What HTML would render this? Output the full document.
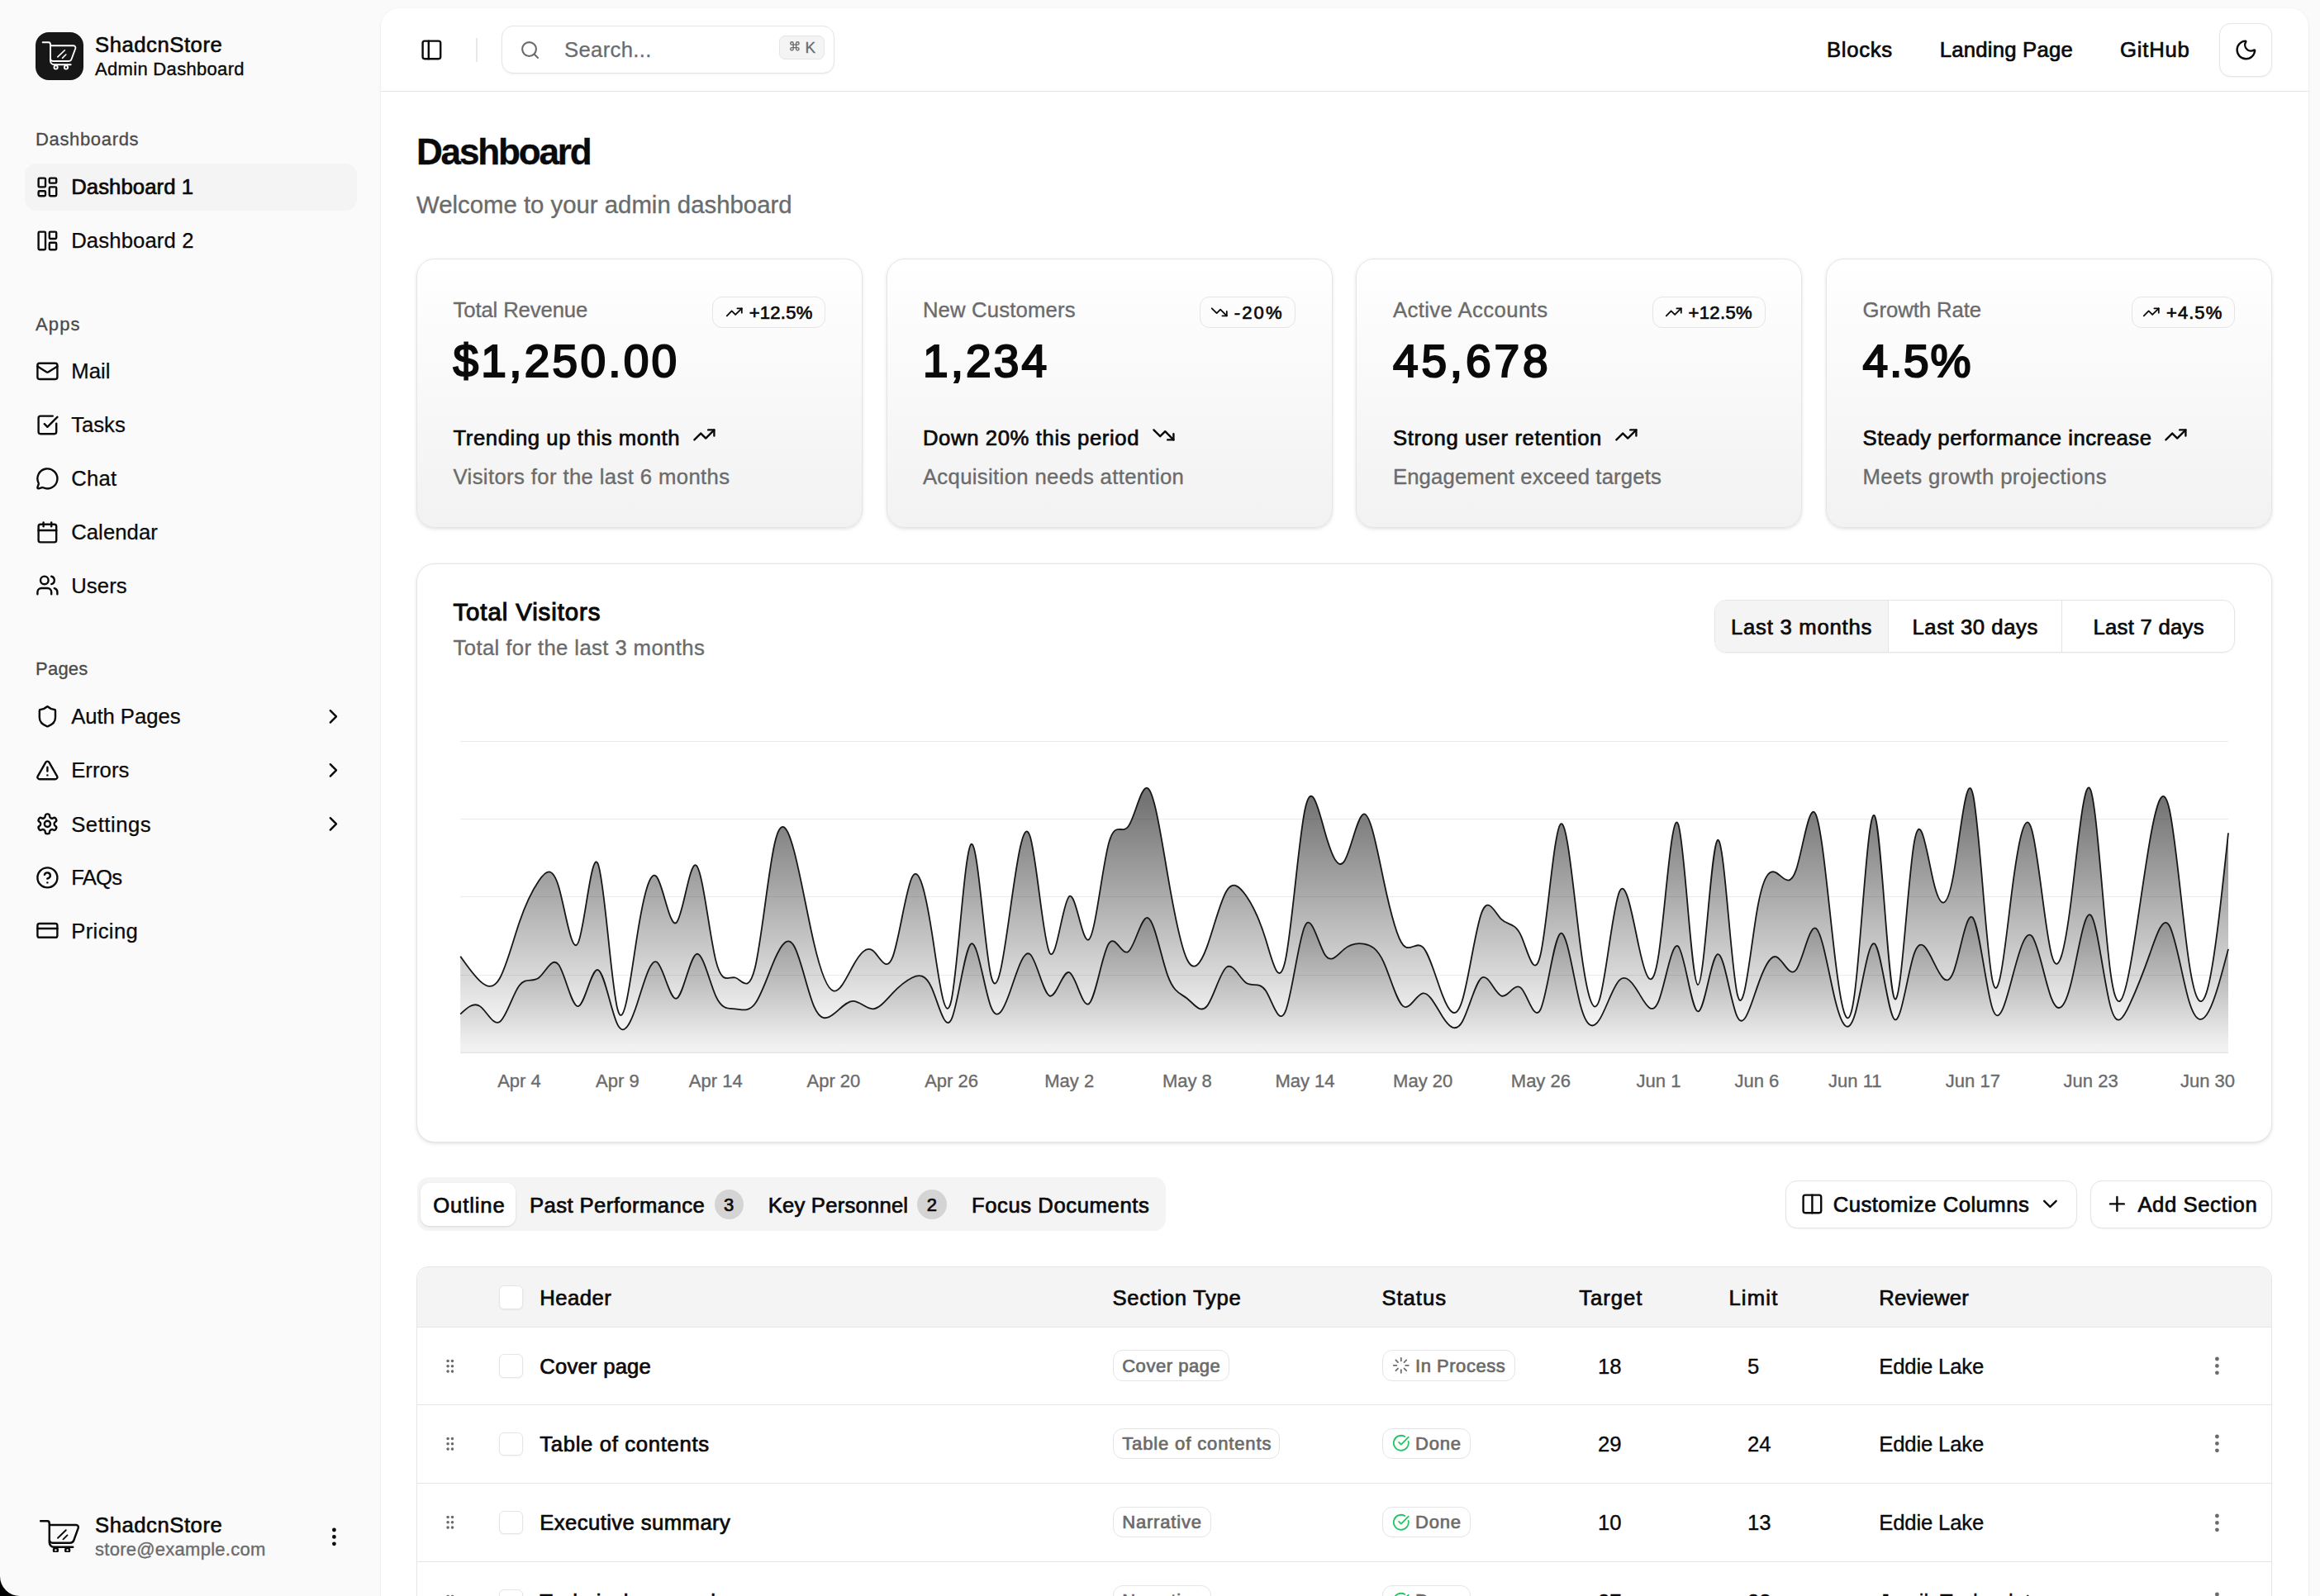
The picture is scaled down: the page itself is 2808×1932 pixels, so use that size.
<!DOCTYPE html>
<html><head><meta charset="utf-8"><style>
html,body{margin:0;padding:0;}
body{width:2808px;height:1932px;overflow:hidden;position:relative;background:#fafafa;font-family:"Liberation Sans",sans-serif;}
.t{position:absolute;white-space:nowrap;line-height:1;}
</style></head><body>
<div style="position:absolute;left:43.1px;top:38.9px;width:57.7px;height:57.9px;background:#171717;border-radius:16px;"></div>
<svg style="position:absolute;left:38px;top:34px" width="68" height="68" viewBox="0 0 1596 1596" fill="none" stroke="#fff" stroke-width="44" stroke-linecap="round" stroke-linejoin="round"><path d="M320 405H490C520 405 540 430 540 470V930C540 990 590 1040 650 1040H1120"/><path d="M545 500H1200C1240 500 1262 540 1250 580L1140 880C1125 920 1095 940 1050 940H620C580 940 548 915 545 880"/><path d="M748 820L948 628" stroke-width="38"/><path d="M880 852L982 752" stroke-width="38"/><circle cx="695" cy="1115" r="50"/><circle cx="985" cy="1115" r="50"/></svg>
<div id="t0" class="t" style="left:115.0px;top:42.2px;font-size:25.704px;font-weight:400;color:#0a0a0a;letter-spacing:0.527px;-webkit-text-stroke:0.6px #0a0a0a;">ShadcnStore</div>
<div id="t1" class="t" style="left:115.0px;top:73.3px;font-size:22.032000000000004px;font-weight:400;color:#0a0a0a;letter-spacing:0.308px;-webkit-text-stroke:0.35px #0a0a0a;">Admin Dashboard</div>
<div id="t2" class="t" style="left:43.0px;top:158.3px;font-size:22.032000000000004px;font-weight:400;color:#4a4a4a;letter-spacing:0.647px;-webkit-text-stroke:0.3px #4a4a4a;">Dashboards</div>
<div id="t3" class="t" style="left:43.0px;top:382.3px;font-size:22.032000000000004px;font-weight:400;color:#4a4a4a;letter-spacing:1.118px;-webkit-text-stroke:0.3px #4a4a4a;">Apps</div>
<div id="t4" class="t" style="left:43.0px;top:799.4px;font-size:22.032000000000004px;font-weight:400;color:#4a4a4a;letter-spacing:0.226px;-webkit-text-stroke:0.3px #4a4a4a;">Pages</div>
<div style="position:absolute;left:29.5px;top:198.0px;width:402.2px;height:56.5px;background:#f4f4f4;border-radius:14px;"></div>
<svg style="position:absolute;left:42.6px;top:211.8px;" width="28.8" height="28.8" viewBox="0 0 24 24" fill="none" stroke="#0a0a0a" stroke-width="2" stroke-linecap="round" stroke-linejoin="round"><rect width="7" height="9" x="3" y="3" rx="1"/><rect width="7" height="5" x="14" y="3" rx="1"/><rect width="7" height="9" x="14" y="12" rx="1"/><rect width="7" height="5" x="3" y="16" rx="1"/></svg>
<div id="t5" class="t" style="left:86.2px;top:214.4px;font-size:25.704px;font-weight:400;color:#0a0a0a;letter-spacing:0.071px;-webkit-text-stroke:0.7px #0a0a0a;">Dashboard 1</div>
<svg style="position:absolute;left:42.6px;top:276.8px;" width="28.8" height="28.8" viewBox="0 0 24 24" fill="none" stroke="#0a0a0a" stroke-width="2" stroke-linecap="round" stroke-linejoin="round"><rect width="7" height="18" x="3" y="3" rx="1"/><rect width="7" height="7" x="14" y="3" rx="1"/><rect width="7" height="7" x="14" y="14" rx="1"/></svg>
<div id="t6" class="t" style="left:86.2px;top:279.4px;font-size:25.704px;font-weight:400;color:#0a0a0a;letter-spacing:0.121px;-webkit-text-stroke:0.25px #0a0a0a;">Dashboard 2</div>
<svg style="position:absolute;left:42.6px;top:434.8px;" width="28.8" height="28.8" viewBox="0 0 24 24" fill="none" stroke="#0a0a0a" stroke-width="2" stroke-linecap="round" stroke-linejoin="round"><rect width="20" height="16" x="2" y="4" rx="2"/><path d="m22 7-8.97 5.7a1.94 1.94 0 0 1-2.06 0L2 7"/></svg>
<div id="t7" class="t" style="left:86.2px;top:437.4px;font-size:25.704px;font-weight:400;color:#0a0a0a;letter-spacing:0.097px;-webkit-text-stroke:0.25px #0a0a0a;">Mail</div>
<svg style="position:absolute;left:42.6px;top:499.8px;" width="28.8" height="28.8" viewBox="0 0 24 24" fill="none" stroke="#0a0a0a" stroke-width="2" stroke-linecap="round" stroke-linejoin="round"><path d="M21 10.656V19a2 2 0 0 1-2 2H5a2 2 0 0 1-2-2V5a2 2 0 0 1 2-2h12.344"/><path d="m9 11 3 3L22 4"/></svg>
<div id="t8" class="t" style="left:86.2px;top:502.4px;font-size:25.704px;font-weight:400;color:#0a0a0a;letter-spacing:-0.018px;-webkit-text-stroke:0.25px #0a0a0a;">Tasks</div>
<svg style="position:absolute;left:42.6px;top:564.8px;" width="28.8" height="28.8" viewBox="0 0 24 24" fill="none" stroke="#0a0a0a" stroke-width="2" stroke-linecap="round" stroke-linejoin="round"><path d="M2.992 16.342a2 2 0 0 1 .094 1.167l-1.065 3.29a1 1 0 0 0 1.236 1.168l3.413-.998a2 2 0 0 1 1.099.092 10 10 0 1 0-4.777-4.719"/></svg>
<div id="t9" class="t" style="left:86.2px;top:567.4px;font-size:25.704px;font-weight:400;color:#0a0a0a;letter-spacing:0.245px;-webkit-text-stroke:0.25px #0a0a0a;">Chat</div>
<svg style="position:absolute;left:42.6px;top:629.8px;" width="28.8" height="28.8" viewBox="0 0 24 24" fill="none" stroke="#0a0a0a" stroke-width="2" stroke-linecap="round" stroke-linejoin="round"><path d="M8 2v4"/><path d="M16 2v4"/><rect width="18" height="18" x="3" y="4" rx="2"/><path d="M3 10h18"/></svg>
<div id="t10" class="t" style="left:86.2px;top:632.4px;font-size:25.704px;font-weight:400;color:#0a0a0a;letter-spacing:0.050px;-webkit-text-stroke:0.25px #0a0a0a;">Calendar</div>
<svg style="position:absolute;left:42.6px;top:694.4px;" width="28.8" height="28.8" viewBox="0 0 24 24" fill="none" stroke="#0a0a0a" stroke-width="2" stroke-linecap="round" stroke-linejoin="round"><path d="M16 21v-2a4 4 0 0 0-4-4H6a4 4 0 0 0-4 4v2"/><circle cx="9" cy="7" r="4"/><path d="M22 21v-2a4 4 0 0 0-3-3.87"/><path d="M16 3.13a4 4 0 0 1 0 7.75"/></svg>
<div id="t11" class="t" style="left:86.2px;top:697.0px;font-size:25.704px;font-weight:400;color:#0a0a0a;letter-spacing:0.101px;-webkit-text-stroke:0.25px #0a0a0a;">Users</div>
<svg style="position:absolute;left:42.6px;top:852.6px;" width="28.8" height="28.8" viewBox="0 0 24 24" fill="none" stroke="#0a0a0a" stroke-width="2" stroke-linecap="round" stroke-linejoin="round"><path d="M20 13c0 5-3.5 7.5-7.66 8.95a1 1 0 0 1-.67-.01C7.5 20.5 4 18 4 13V6a1 1 0 0 1 1-1c2 0 4.5-1.2 6.24-2.72a1.17 1.17 0 0 1 1.52 0C14.51 3.81 17 5 19 5a1 1 0 0 1 1 1z"/></svg>
<div id="t12" class="t" style="left:86.2px;top:855.2px;font-size:25.704px;font-weight:400;color:#0a0a0a;letter-spacing:-0.059px;-webkit-text-stroke:0.25px #0a0a0a;">Auth Pages</div>
<svg style="position:absolute;left:42.6px;top:917.6px;" width="28.8" height="28.8" viewBox="0 0 24 24" fill="none" stroke="#0a0a0a" stroke-width="2" stroke-linecap="round" stroke-linejoin="round"><path d="m21.73 18-8-14a2 2 0 0 0-3.48 0l-8 14A2 2 0 0 0 4 21h16a2 2 0 0 0 1.73-3"/><path d="M12 9v4"/><path d="M12 17h.01"/></svg>
<div id="t13" class="t" style="left:86.2px;top:920.2px;font-size:25.704px;font-weight:400;color:#0a0a0a;letter-spacing:0.052px;-webkit-text-stroke:0.25px #0a0a0a;">Errors</div>
<svg style="position:absolute;left:42.6px;top:982.9px;" width="28.8" height="28.8" viewBox="0 0 24 24" fill="none" stroke="#0a0a0a" stroke-width="2" stroke-linecap="round" stroke-linejoin="round"><path d="M12.22 2h-.44a2 2 0 0 0-2 2v.18a2 2 0 0 1-1 1.73l-.43.25a2 2 0 0 1-2 0l-.15-.08a2 2 0 0 0-2.73.73l-.22.38a2 2 0 0 0 .73 2.73l.15.1a2 2 0 0 1 1 1.72v.51a2 2 0 0 1-1 1.74l-.15.09a2 2 0 0 0-.73 2.73l.22.38a2 2 0 0 0 2.73.73l.15-.08a2 2 0 0 1 2 0l.43.25a2 2 0 0 1 1 1.73V20a2 2 0 0 0 2 2h.44a2 2 0 0 0 2-2v-.18a2 2 0 0 1 1-1.73l.43-.25a2 2 0 0 1 2 0l.15.08a2 2 0 0 0 2.73-.73l.22-.39a2 2 0 0 0-.73-2.73l-.15-.08a2 2 0 0 1-1-1.74v-.5a2 2 0 0 1 1-1.74l.15-.09a2 2 0 0 0 .73-2.73l-.22-.38a2 2 0 0 0-2.73-.73l-.15.08a2 2 0 0 1-2 0l-.43-.25a2 2 0 0 1-1-1.73V4a2 2 0 0 0-2-2z"/><circle cx="12" cy="12" r="3"/></svg>
<div id="t14" class="t" style="left:86.2px;top:985.5px;font-size:25.704px;font-weight:400;color:#0a0a0a;letter-spacing:0.524px;-webkit-text-stroke:0.25px #0a0a0a;">Settings</div>
<svg style="position:absolute;left:42.6px;top:1047.6px;" width="28.8" height="28.8" viewBox="0 0 24 24" fill="none" stroke="#0a0a0a" stroke-width="2" stroke-linecap="round" stroke-linejoin="round"><circle cx="12" cy="12" r="10"/><path d="M9.09 9a3 3 0 0 1 5.83 1c0 2-3 3-3 3"/><path d="M12 17h.01"/></svg>
<div id="t15" class="t" style="left:86.2px;top:1050.2px;font-size:25.704px;font-weight:400;color:#0a0a0a;letter-spacing:-0.778px;-webkit-text-stroke:0.25px #0a0a0a;">FAQs</div>
<svg style="position:absolute;left:42.6px;top:1112.0px;" width="28.8" height="28.8" viewBox="0 0 24 24" fill="none" stroke="#0a0a0a" stroke-width="2" stroke-linecap="round" stroke-linejoin="round"><rect width="20" height="14" x="2" y="5" rx="2"/><line x1="2" x2="22" y1="10" y2="10"/></svg>
<div id="t16" class="t" style="left:86.2px;top:1114.6px;font-size:25.704px;font-weight:400;color:#0a0a0a;letter-spacing:0.361px;-webkit-text-stroke:0.25px #0a0a0a;">Pricing</div>
<svg style="position:absolute;left:388.6px;top:852.6px;" width="28.8" height="28.8" viewBox="0 0 24 24" fill="none" stroke="#0a0a0a" stroke-width="2" stroke-linecap="round" stroke-linejoin="round"><path d="m9 18 6-6-6-6"/></svg>
<svg style="position:absolute;left:388.6px;top:917.6px;" width="28.8" height="28.8" viewBox="0 0 24 24" fill="none" stroke="#0a0a0a" stroke-width="2" stroke-linecap="round" stroke-linejoin="round"><path d="m9 18 6-6-6-6"/></svg>
<svg style="position:absolute;left:388.6px;top:982.9px;" width="28.8" height="28.8" viewBox="0 0 24 24" fill="none" stroke="#0a0a0a" stroke-width="2" stroke-linecap="round" stroke-linejoin="round"><path d="m9 18 6-6-6-6"/></svg>
<svg style="position:absolute;left:48.2px;top:1839.5px" width="47.4" height="39.6" viewBox="300 380 965 800" preserveAspectRatio="none" fill="none" stroke="#0a0a0a" stroke-width="50" stroke-linecap="round" stroke-linejoin="round"><path d="M320 405H490C520 405 540 430 540 470V930C540 990 590 1040 650 1040H1120"/><path d="M545 500H1200C1240 500 1262 540 1250 580L1140 880C1125 920 1095 940 1050 940H620C580 940 548 915 545 880"/><path d="M748 820L948 628" stroke-width="38"/><path d="M880 852L982 752" stroke-width="38"/><circle cx="695" cy="1115" r="50"/><circle cx="985" cy="1115" r="50"/></svg>
<div id="t17" class="t" style="left:115.0px;top:1834.2px;font-size:25.704px;font-weight:400;color:#0a0a0a;letter-spacing:0.527px;-webkit-text-stroke:0.6px #0a0a0a;">ShadcnStore</div>
<div id="t18" class="t" style="left:115.0px;top:1865.1px;font-size:22.032000000000004px;font-weight:400;color:#6b6b6b;letter-spacing:0.258px;-webkit-text-stroke:0.35px #6b6b6b;">store@example.com</div>
<svg style="position:absolute;left:389.6px;top:1846.1px;" width="28.8" height="28.8" viewBox="0 0 24 24" fill="none" stroke="#0a0a0a" stroke-width="2" stroke-linecap="round" stroke-linejoin="round"><circle cx="12" cy="12" r="1"/><circle cx="12" cy="5" r="1"/><circle cx="12" cy="19" r="1"/></svg>
<svg style="position:absolute;left:0;top:1900px" width="32" height="32" viewBox="0 0 32 32"><path d="M0 8A24 24 0 0 0 24 32H0Z" fill="#000"/></svg>
<div style="position:absolute;left:460.8px;top:10.0px;width:2333.2px;height:1950.0px;background:#fff;border-radius:22px;box-shadow:0 1px 3px rgba(0,0,0,0.1),0 1px 2px -1px rgba(0,0,0,0.1);"></div>
<div style="position:absolute;left:461.0px;top:110.0px;width:2333.0px;height:1.0px;background:#e5e5e5;"></div>
<svg style="position:absolute;left:507.8px;top:45.9px;" width="28.8" height="28.8" viewBox="0 0 24 24" fill="none" stroke="#0a0a0a" stroke-width="2" stroke-linecap="round" stroke-linejoin="round"><rect width="18" height="18" x="3" y="3" rx="2"/><path d="M9 3v18"/></svg>
<div style="position:absolute;left:576.0px;top:46.0px;width:2.0px;height:29.0px;background:#e8e8e8;"></div>
<div style="position:absolute;left:607.0px;top:31.0px;width:402.5px;height:57.5px;background:#fff;border:1px solid #e5e5e5;box-sizing:border-box;border-radius:14px;box-shadow:0 1px 2px rgba(0,0,0,0.06);"></div>
<svg style="position:absolute;left:628.9px;top:47.9px;" width="25.2" height="25.2" viewBox="0 0 24 24" fill="none" stroke="#6b6b6b" stroke-width="2" stroke-linecap="round" stroke-linejoin="round"><circle cx="11" cy="11" r="8"/><path d="m21 21-4.3-4.3"/></svg>
<div id="t19" class="t" style="left:683.0px;top:48.2px;font-size:25.704px;font-weight:400;color:#6b6b6b;letter-spacing:0.311px;-webkit-text-stroke:0.25px #6b6b6b;">Search...</div>
<div style="position:absolute;left:943.3px;top:43.1px;width:54.5px;height:28.5px;background:#f4f4f4;border:1px solid #e5e5e5;box-sizing:border-box;border-radius:7px;"></div>
<svg style="position:absolute;left:954.5px;top:48.9px" width="13.8" height="13.8" viewBox="0 0 24 24" fill="none" stroke="#6b6b6b" stroke-width="2.4" stroke-linecap="round" stroke-linejoin="round"><path d="M15 6v12a3 3 0 1 0 3-3H6a3 3 0 1 0 3 3V6a3 3 0 1 0-3 3h12a3 3 0 1 0-3-3"/></svg>
<div id="t20" class="t" style="left:974.5px;top:48.8px;font-size:18.8px;font-weight:400;color:#6b6b6b;-webkit-text-stroke:0.35px #6b6b6b;">K</div>
<div id="t21" class="t" style="left:2211.0px;top:48.2px;font-size:25.704px;font-weight:400;color:#0a0a0a;letter-spacing:0.705px;-webkit-text-stroke:0.7px #0a0a0a;">Blocks</div>
<div id="t22" class="t" style="left:2347.7px;top:48.2px;font-size:25.704px;font-weight:400;color:#0a0a0a;letter-spacing:0.231px;-webkit-text-stroke:0.7px #0a0a0a;">Landing Page</div>
<div id="t23" class="t" style="left:2566.0px;top:48.2px;font-size:25.704px;font-weight:400;color:#0a0a0a;letter-spacing:0.769px;-webkit-text-stroke:0.7px #0a0a0a;">GitHub</div>
<div style="position:absolute;left:2686.0px;top:28.0px;width:64.0px;height:65.0px;background:#fff;border:1px solid #e5e5e5;box-sizing:border-box;border-radius:14px;box-shadow:0 1px 2px rgba(0,0,0,0.05);"></div>
<svg style="position:absolute;left:2704.0px;top:46.0px;" width="28.8" height="28.8" viewBox="0 0 24 24" fill="none" stroke="#0a0a0a" stroke-width="2" stroke-linecap="round" stroke-linejoin="round"><path d="M20.985 12.486a9 9 0 1 1-9.473-9.472c.405-.022.617.46.402.803a6 6 0 0 0 8.268 8.268c.344-.215.825-.004.803.401"/></svg>
<div id="t24" class="t" style="left:504.0px;top:161.5px;font-size:44.06400000000001px;font-weight:700;color:#0a0a0a;letter-spacing:-2.187px;-webkit-text-stroke:0.35px #0a0a0a;">Dashboard</div>
<div id="t25" class="t" style="left:504.0px;top:232.5px;font-size:29.376px;font-weight:400;color:#6b6b6b;letter-spacing:-0.007px;-webkit-text-stroke:0.35px #6b6b6b;">Welcome to your admin dashboard</div>
<div style="position:absolute;left:504.0px;top:313.0px;width:540.0px;height:326.0px;border:1px solid #e5e5e5;box-sizing:border-box;border-radius:22px;background:linear-gradient(to top, #f2f2f2, #ffffff);box-shadow:0 1.8px 5.4px rgba(0,0,0,0.08),0 1.8px 3.6px -1.8px rgba(0,0,0,0.08);"></div>
<div id="t26" class="t" style="left:548.5px;top:363.2px;font-size:25.704px;font-weight:400;color:#6b6b6b;letter-spacing:-0.120px;-webkit-text-stroke:0.35px #6b6b6b;">Total Revenue</div>
<div id="t27" class="t" style="left:548.5px;top:409.7px;font-size:55.08px;font-weight:400;color:#0a0a0a;letter-spacing:3.216px;-webkit-text-stroke:2.2px #0a0a0a;">$1,250.00</div>
<div style="position:absolute;left:862.4px;top:359.0px;width:137.1px;height:38.0px;border:1px solid #e5e5e5;box-sizing:border-box;border-radius:12px;"></div>
<div id="t28" class="t" style="left:906.7px;top:368.3px;font-size:22.032000000000004px;font-weight:400;color:#0a0a0a;letter-spacing:0.252px;-webkit-text-stroke:0.7px #0a0a0a;">+12.5%</div>
<svg style="position:absolute;left:877.8px;top:367.2px;" width="21.6" height="21.6" viewBox="0 0 24 24" fill="none" stroke="#0a0a0a" stroke-width="2" stroke-linecap="round" stroke-linejoin="round"><polyline points="22 7 13.5 15.5 8.5 10.5 2 17"/><polyline points="16 7 22 7 22 13"/></svg>
<div id="t29" class="t" style="left:548.5px;top:518.4px;font-size:25.704px;font-weight:400;color:#0a0a0a;letter-spacing:0.587px;-webkit-text-stroke:0.7px #0a0a0a;">Trending up this month</div>
<svg style="position:absolute;left:837.9px;top:512.1px;" width="28.8" height="28.8" viewBox="0 0 24 24" fill="none" stroke="#0a0a0a" stroke-width="2" stroke-linecap="round" stroke-linejoin="round"><polyline points="22 7 13.5 15.5 8.5 10.5 2 17"/><polyline points="16 7 22 7 22 13"/></svg>
<div id="t30" class="t" style="left:548.5px;top:564.9px;font-size:25.704px;font-weight:400;color:#6b6b6b;letter-spacing:0.378px;-webkit-text-stroke:0.35px #6b6b6b;">Visitors for the last 6 months</div>
<div style="position:absolute;left:1072.7px;top:313.0px;width:540.0px;height:326.0px;border:1px solid #e5e5e5;box-sizing:border-box;border-radius:22px;background:linear-gradient(to top, #f2f2f2, #ffffff);box-shadow:0 1.8px 5.4px rgba(0,0,0,0.08),0 1.8px 3.6px -1.8px rgba(0,0,0,0.08);"></div>
<div id="t31" class="t" style="left:1116.9px;top:363.2px;font-size:25.704px;font-weight:400;color:#6b6b6b;letter-spacing:0.157px;-webkit-text-stroke:0.35px #6b6b6b;">New Customers</div>
<div id="t32" class="t" style="left:1116.9px;top:409.7px;font-size:55.08px;font-weight:400;color:#0a0a0a;letter-spacing:3.103px;-webkit-text-stroke:2.2px #0a0a0a;">1,234</div>
<div style="position:absolute;left:1451.8px;top:359.0px;width:116.1px;height:38.0px;border:1px solid #e5e5e5;box-sizing:border-box;border-radius:12px;"></div>
<div id="t33" class="t" style="left:1493.7px;top:368.3px;font-size:22.032000000000004px;font-weight:400;color:#0a0a0a;letter-spacing:2.179px;-webkit-text-stroke:0.7px #0a0a0a;">-20%</div>
<svg style="position:absolute;left:1464.8px;top:367.2px;" width="21.6" height="21.6" viewBox="0 0 24 24" fill="none" stroke="#0a0a0a" stroke-width="2" stroke-linecap="round" stroke-linejoin="round"><polyline points="22 17 13.5 8.5 8.5 13.5 2 7"/><polyline points="16 17 22 17 22 11"/></svg>
<div id="t34" class="t" style="left:1116.9px;top:518.4px;font-size:25.704px;font-weight:400;color:#0a0a0a;letter-spacing:0.616px;-webkit-text-stroke:0.7px #0a0a0a;">Down 20% this period</div>
<svg style="position:absolute;left:1393.8px;top:512.1px;" width="28.8" height="28.8" viewBox="0 0 24 24" fill="none" stroke="#0a0a0a" stroke-width="2" stroke-linecap="round" stroke-linejoin="round"><polyline points="22 17 13.5 8.5 8.5 13.5 2 7"/><polyline points="16 17 22 17 22 11"/></svg>
<div id="t35" class="t" style="left:1116.9px;top:564.9px;font-size:25.704px;font-weight:400;color:#6b6b6b;letter-spacing:0.344px;-webkit-text-stroke:0.35px #6b6b6b;">Acquisition needs attention</div>
<div style="position:absolute;left:1641.4px;top:313.0px;width:540.0px;height:326.0px;border:1px solid #e5e5e5;box-sizing:border-box;border-radius:22px;background:linear-gradient(to top, #f2f2f2, #ffffff);box-shadow:0 1.8px 5.4px rgba(0,0,0,0.08),0 1.8px 3.6px -1.8px rgba(0,0,0,0.08);"></div>
<div id="t36" class="t" style="left:1685.9px;top:363.2px;font-size:25.704px;font-weight:400;color:#6b6b6b;letter-spacing:0.411px;-webkit-text-stroke:0.35px #6b6b6b;">Active Accounts</div>
<div id="t37" class="t" style="left:1685.9px;top:409.7px;font-size:55.08px;font-weight:400;color:#0a0a0a;letter-spacing:3.857px;-webkit-text-stroke:2.2px #0a0a0a;">45,678</div>
<div style="position:absolute;left:2000.3px;top:359.0px;width:136.6px;height:38.0px;border:1px solid #e5e5e5;box-sizing:border-box;border-radius:12px;"></div>
<div id="t38" class="t" style="left:2043.5px;top:368.3px;font-size:22.032000000000004px;font-weight:400;color:#0a0a0a;letter-spacing:0.372px;-webkit-text-stroke:0.7px #0a0a0a;">+12.5%</div>
<svg style="position:absolute;left:2014.6px;top:367.2px;" width="21.6" height="21.6" viewBox="0 0 24 24" fill="none" stroke="#0a0a0a" stroke-width="2" stroke-linecap="round" stroke-linejoin="round"><polyline points="22 7 13.5 15.5 8.5 10.5 2 17"/><polyline points="16 7 22 7 22 13"/></svg>
<div id="t39" class="t" style="left:1685.9px;top:518.4px;font-size:25.704px;font-weight:400;color:#0a0a0a;letter-spacing:0.630px;-webkit-text-stroke:0.7px #0a0a0a;">Strong user retention</div>
<svg style="position:absolute;left:1953.7px;top:512.1px;" width="28.8" height="28.8" viewBox="0 0 24 24" fill="none" stroke="#0a0a0a" stroke-width="2" stroke-linecap="round" stroke-linejoin="round"><polyline points="22 7 13.5 15.5 8.5 10.5 2 17"/><polyline points="16 7 22 7 22 13"/></svg>
<div id="t40" class="t" style="left:1685.9px;top:564.9px;font-size:25.704px;font-weight:400;color:#6b6b6b;letter-spacing:0.149px;-webkit-text-stroke:0.35px #6b6b6b;">Engagement exceed targets</div>
<div style="position:absolute;left:2210.1px;top:313.0px;width:540.0px;height:326.0px;border:1px solid #e5e5e5;box-sizing:border-box;border-radius:22px;background:linear-gradient(to top, #f2f2f2, #ffffff);box-shadow:0 1.8px 5.4px rgba(0,0,0,0.08),0 1.8px 3.6px -1.8px rgba(0,0,0,0.08);"></div>
<div id="t41" class="t" style="left:2254.5px;top:363.2px;font-size:25.704px;font-weight:400;color:#6b6b6b;letter-spacing:-0.060px;-webkit-text-stroke:0.35px #6b6b6b;">Growth Rate</div>
<div id="t42" class="t" style="left:2254.5px;top:409.7px;font-size:55.08px;font-weight:400;color:#0a0a0a;letter-spacing:1.803px;-webkit-text-stroke:2.2px #0a0a0a;">4.5%</div>
<div style="position:absolute;left:2579.6px;top:359.0px;width:125.9px;height:38.0px;border:1px solid #e5e5e5;box-sizing:border-box;border-radius:12px;"></div>
<div id="t43" class="t" style="left:2622.0px;top:368.3px;font-size:22.032000000000004px;font-weight:400;color:#0a0a0a;letter-spacing:1.049px;-webkit-text-stroke:0.7px #0a0a0a;">+4.5%</div>
<svg style="position:absolute;left:2593.1px;top:367.2px;" width="21.6" height="21.6" viewBox="0 0 24 24" fill="none" stroke="#0a0a0a" stroke-width="2" stroke-linecap="round" stroke-linejoin="round"><polyline points="22 7 13.5 15.5 8.5 10.5 2 17"/><polyline points="16 7 22 7 22 13"/></svg>
<div id="t44" class="t" style="left:2254.5px;top:518.4px;font-size:25.704px;font-weight:400;color:#0a0a0a;letter-spacing:0.537px;-webkit-text-stroke:0.7px #0a0a0a;">Steady performance increase</div>
<svg style="position:absolute;left:2619.3px;top:512.1px;" width="28.8" height="28.8" viewBox="0 0 24 24" fill="none" stroke="#0a0a0a" stroke-width="2" stroke-linecap="round" stroke-linejoin="round"><polyline points="22 7 13.5 15.5 8.5 10.5 2 17"/><polyline points="16 7 22 7 22 13"/></svg>
<div id="t45" class="t" style="left:2254.5px;top:564.9px;font-size:25.704px;font-weight:400;color:#6b6b6b;letter-spacing:0.410px;-webkit-text-stroke:0.35px #6b6b6b;">Meets growth projections</div>
<div style="position:absolute;left:504.0px;top:682.0px;width:2246.0px;height:701.0px;border:1px solid #e5e5e5;box-sizing:border-box;border-radius:22px;background:#fff;box-shadow:0 1.8px 5.4px rgba(0,0,0,0.08),0 1.8px 3.6px -1.8px rgba(0,0,0,0.08);"></div>
<div id="t46" class="t" style="left:548.5px;top:726.0px;font-size:29.376px;font-weight:400;color:#0a0a0a;letter-spacing:0.919px;-webkit-text-stroke:1.1px #0a0a0a;">Total Visitors</div>
<div id="t47" class="t" style="left:548.5px;top:772.4px;font-size:25.704px;font-weight:400;color:#6b6b6b;letter-spacing:0.391px;-webkit-text-stroke:0.35px #6b6b6b;">Total for the last 3 months</div>
<div style="position:absolute;left:2075.4px;top:726.4px;width:630.0px;height:63.6px;border:1px solid #e5e5e5;box-sizing:border-box;border-radius:14px;box-shadow:0 1px 2px rgba(0,0,0,0.05);overflow:hidden;"></div>
<div style="position:absolute;left:2076.4px;top:727.4px;width:209.2px;height:61.6px;background:#f4f4f4;border-radius:13px 0 0 13px;"></div>
<div style="position:absolute;left:2285.1px;top:727.4px;width:1.0px;height:61.6px;background:#e5e5e5;"></div>
<div style="position:absolute;left:2495.0px;top:727.4px;width:1.0px;height:61.6px;background:#e5e5e5;"></div>
<div id="t48" class="t" style="left:2095.0px;top:747.0px;font-size:25.704px;font-weight:400;color:#0a0a0a;letter-spacing:0.745px;-webkit-text-stroke:0.7px #0a0a0a;">Last 3 months</div>
<div id="t49" class="t" style="left:2314.5px;top:747.0px;font-size:25.704px;font-weight:400;color:#0a0a0a;letter-spacing:0.557px;-webkit-text-stroke:0.7px #0a0a0a;">Last 30 days</div>
<div id="t50" class="t" style="left:2533.4px;top:747.0px;font-size:25.704px;font-weight:400;color:#0a0a0a;letter-spacing:0.282px;-webkit-text-stroke:0.7px #0a0a0a;">Last 7 days</div>
<div style="position:absolute;left:557.2px;top:896.5px;width:2139.8px;height:1.0px;background:#ebebeb;"></div>
<div style="position:absolute;left:557.2px;top:990.8px;width:2139.8px;height:1.0px;background:#ebebeb;"></div>
<div style="position:absolute;left:557.2px;top:1085.1px;width:2139.8px;height:1.0px;background:#ebebeb;"></div>
<div style="position:absolute;left:557.2px;top:1179.5px;width:2139.8px;height:1.0px;background:#ebebeb;"></div>
<div style="position:absolute;left:557.2px;top:1274.3px;width:2139.8px;height:1.0px;background:#ebebeb;"></div>
<svg width="2160" height="420" viewBox="0 0 2160 420" style="position:absolute;left:550px;top:880px;overflow:visible">
<defs>
<linearGradient id="fD" x1="0" y1="0" x2="0" y2="1"><stop offset="5%" stop-color="#171717" stop-opacity="1.0"/><stop offset="95%" stop-color="#171717" stop-opacity="0.1"/></linearGradient>
<linearGradient id="fM" x1="0" y1="0" x2="0" y2="1"><stop offset="5%" stop-color="#171717" stop-opacity="0.8"/><stop offset="95%" stop-color="#171717" stop-opacity="0.1"/></linearGradient>
</defs>
<path d="M7.20,347.58C15.13,340.11,23.05,332.64,30.98,338.13C38.90,343.62,46.83,362.05,54.75,357.02C62.68,351.99,70.60,323.49,78.53,312.94C86.45,302.40,94.38,309.82,102.30,303.50C110.23,297.18,118.15,277.13,126.08,287.76C134.00,298.39,141.93,339.70,149.85,338.13C157.78,336.56,165.70,292.09,173.63,294.05C181.55,296.01,189.48,344.40,197.40,360.17C205.33,375.94,213.25,359.08,221.18,334.98C229.11,310.88,237.03,279.53,244.96,284.61C252.88,289.68,260.81,331.18,268.73,328.68C276.66,326.19,284.58,279.70,292.51,275.16C300.43,270.62,308.36,308.03,316.28,325.54C324.21,343.04,332.13,340.65,340.06,341.28C347.98,341.90,355.91,345.54,363.83,334.98C371.76,324.42,379.68,299.66,387.61,281.46C395.53,263.26,403.46,251.62,411.38,265.72C419.31,279.81,427.23,319.64,435.16,338.13C443.09,356.62,451.01,353.78,458.94,347.58C466.86,341.37,474.79,331.79,482.71,331.83C490.64,331.88,498.56,341.55,506.49,341.28C514.41,341.01,522.34,330.79,530.26,322.39C538.19,313.99,546.11,307.40,554.04,303.50C561.96,299.60,569.89,298.39,577.81,316.09C585.74,333.79,593.66,370.41,601.59,353.87C609.51,337.33,617.44,267.64,625.36,262.57C633.29,257.50,641.21,317.04,649.14,338.13C657.07,359.22,664.99,341.87,672.92,319.24C680.84,296.61,688.77,268.71,696.69,275.16C704.62,281.62,712.54,322.43,720.47,325.54C728.39,328.65,736.32,294.06,744.24,297.20C752.17,300.34,760.09,341.22,768.02,334.98C775.94,328.75,783.87,275.41,791.79,262.57C799.72,249.73,807.64,277.40,815.57,272.01C823.49,266.63,831.42,228.18,839.34,231.09C847.27,233.99,855.19,278.25,863.12,300.35C871.05,322.45,878.97,322.39,886.90,328.68C894.82,334.98,902.75,347.62,910.67,338.13C918.60,328.64,926.52,297.02,934.45,290.90C942.37,284.79,950.30,304.16,958.22,309.80C966.15,315.43,974.07,307.31,982.00,319.24C989.92,331.17,997.85,363.13,1005.77,344.43C1013.70,325.72,1021.62,256.35,1029.55,240.53C1037.47,224.72,1045.40,262.46,1053.32,275.16C1061.25,287.86,1069.17,275.51,1077.10,268.87C1085.03,262.22,1092.95,261.27,1100.88,262.57C1108.80,263.87,1116.73,267.41,1124.65,284.61C1132.58,301.80,1140.50,332.65,1148.43,338.13C1156.35,343.61,1164.28,323.71,1172.20,322.39C1180.13,321.07,1188.05,338.33,1195.98,350.72C1203.90,363.12,1211.83,370.65,1219.75,357.02C1227.68,343.39,1235.60,308.59,1243.53,303.50C1251.45,298.41,1259.38,323.02,1267.30,325.54C1275.23,328.06,1283.15,308.48,1291.08,316.09C1299.01,323.70,1306.93,358.49,1314.86,341.28C1322.78,324.06,1330.71,254.84,1338.63,249.98C1346.56,245.12,1354.48,304.62,1362.41,334.98C1370.33,365.34,1378.26,366.55,1386.18,353.87C1394.11,341.19,1402.03,314.63,1409.96,306.65C1417.88,298.66,1425.81,309.25,1433.73,322.39C1441.66,335.53,1449.58,351.21,1457.51,331.83C1465.43,312.46,1473.36,258.02,1481.28,265.72C1489.21,273.42,1497.13,343.27,1505.06,344.43C1512.99,345.58,1520.91,278.05,1528.84,275.16C1536.76,272.27,1544.69,334.02,1552.61,350.72C1560.54,367.43,1568.46,339.08,1576.39,316.09C1584.31,293.10,1592.24,275.47,1600.16,278.31C1608.09,281.15,1616.01,304.45,1623.94,294.05C1631.86,283.65,1639.79,239.55,1647.71,243.68C1655.64,247.81,1663.56,300.18,1671.49,331.83C1679.41,363.48,1687.34,374.42,1695.26,347.58C1703.19,320.73,1711.11,256.12,1719.04,262.57C1726.97,269.02,1734.89,346.53,1742.82,353.87C1750.74,361.22,1758.67,298.40,1766.59,275.16C1774.52,251.93,1782.44,268.28,1790.37,284.61C1798.29,300.93,1806.22,317.23,1814.14,297.20C1822.07,277.17,1829.99,220.82,1837.92,231.09C1845.84,241.35,1853.77,318.24,1861.69,341.28C1869.62,364.31,1877.54,333.49,1885.47,303.50C1893.39,273.50,1901.32,244.33,1909.24,253.12C1917.17,261.92,1925.09,308.68,1933.02,328.68C1940.95,348.69,1948.87,341.94,1956.80,309.80C1964.72,277.65,1972.65,220.11,1980.57,227.94C1988.50,235.77,1996.42,308.98,2004.35,338.13C2012.27,367.28,2020.20,352.37,2028.12,334.98C2036.05,317.60,2043.97,297.74,2051.90,275.16C2059.82,252.59,2067.75,227.31,2075.67,240.53C2083.60,253.75,2091.52,305.48,2099.45,331.83C2107.37,358.18,2115.30,359.15,2123.22,344.43C2131.15,329.70,2139.07,299.28,2147.00,268.87L2147.00,394.80L7.20,394.80Z" fill="url(#fM)" fill-opacity="0.6" stroke="none"/>
<path d="M7.20,347.58C15.13,340.11,23.05,332.64,30.98,338.13C38.90,343.62,46.83,362.05,54.75,357.02C62.68,351.99,70.60,323.49,78.53,312.94C86.45,302.40,94.38,309.82,102.30,303.50C110.23,297.18,118.15,277.13,126.08,287.76C134.00,298.39,141.93,339.70,149.85,338.13C157.78,336.56,165.70,292.09,173.63,294.05C181.55,296.01,189.48,344.40,197.40,360.17C205.33,375.94,213.25,359.08,221.18,334.98C229.11,310.88,237.03,279.53,244.96,284.61C252.88,289.68,260.81,331.18,268.73,328.68C276.66,326.19,284.58,279.70,292.51,275.16C300.43,270.62,308.36,308.03,316.28,325.54C324.21,343.04,332.13,340.65,340.06,341.28C347.98,341.90,355.91,345.54,363.83,334.98C371.76,324.42,379.68,299.66,387.61,281.46C395.53,263.26,403.46,251.62,411.38,265.72C419.31,279.81,427.23,319.64,435.16,338.13C443.09,356.62,451.01,353.78,458.94,347.58C466.86,341.37,474.79,331.79,482.71,331.83C490.64,331.88,498.56,341.55,506.49,341.28C514.41,341.01,522.34,330.79,530.26,322.39C538.19,313.99,546.11,307.40,554.04,303.50C561.96,299.60,569.89,298.39,577.81,316.09C585.74,333.79,593.66,370.41,601.59,353.87C609.51,337.33,617.44,267.64,625.36,262.57C633.29,257.50,641.21,317.04,649.14,338.13C657.07,359.22,664.99,341.87,672.92,319.24C680.84,296.61,688.77,268.71,696.69,275.16C704.62,281.62,712.54,322.43,720.47,325.54C728.39,328.65,736.32,294.06,744.24,297.20C752.17,300.34,760.09,341.22,768.02,334.98C775.94,328.75,783.87,275.41,791.79,262.57C799.72,249.73,807.64,277.40,815.57,272.01C823.49,266.63,831.42,228.18,839.34,231.09C847.27,233.99,855.19,278.25,863.12,300.35C871.05,322.45,878.97,322.39,886.90,328.68C894.82,334.98,902.75,347.62,910.67,338.13C918.60,328.64,926.52,297.02,934.45,290.90C942.37,284.79,950.30,304.16,958.22,309.80C966.15,315.43,974.07,307.31,982.00,319.24C989.92,331.17,997.85,363.13,1005.77,344.43C1013.70,325.72,1021.62,256.35,1029.55,240.53C1037.47,224.72,1045.40,262.46,1053.32,275.16C1061.25,287.86,1069.17,275.51,1077.10,268.87C1085.03,262.22,1092.95,261.27,1100.88,262.57C1108.80,263.87,1116.73,267.41,1124.65,284.61C1132.58,301.80,1140.50,332.65,1148.43,338.13C1156.35,343.61,1164.28,323.71,1172.20,322.39C1180.13,321.07,1188.05,338.33,1195.98,350.72C1203.90,363.12,1211.83,370.65,1219.75,357.02C1227.68,343.39,1235.60,308.59,1243.53,303.50C1251.45,298.41,1259.38,323.02,1267.30,325.54C1275.23,328.06,1283.15,308.48,1291.08,316.09C1299.01,323.70,1306.93,358.49,1314.86,341.28C1322.78,324.06,1330.71,254.84,1338.63,249.98C1346.56,245.12,1354.48,304.62,1362.41,334.98C1370.33,365.34,1378.26,366.55,1386.18,353.87C1394.11,341.19,1402.03,314.63,1409.96,306.65C1417.88,298.66,1425.81,309.25,1433.73,322.39C1441.66,335.53,1449.58,351.21,1457.51,331.83C1465.43,312.46,1473.36,258.02,1481.28,265.72C1489.21,273.42,1497.13,343.27,1505.06,344.43C1512.99,345.58,1520.91,278.05,1528.84,275.16C1536.76,272.27,1544.69,334.02,1552.61,350.72C1560.54,367.43,1568.46,339.08,1576.39,316.09C1584.31,293.10,1592.24,275.47,1600.16,278.31C1608.09,281.15,1616.01,304.45,1623.94,294.05C1631.86,283.65,1639.79,239.55,1647.71,243.68C1655.64,247.81,1663.56,300.18,1671.49,331.83C1679.41,363.48,1687.34,374.42,1695.26,347.58C1703.19,320.73,1711.11,256.12,1719.04,262.57C1726.97,269.02,1734.89,346.53,1742.82,353.87C1750.74,361.22,1758.67,298.40,1766.59,275.16C1774.52,251.93,1782.44,268.28,1790.37,284.61C1798.29,300.93,1806.22,317.23,1814.14,297.20C1822.07,277.17,1829.99,220.82,1837.92,231.09C1845.84,241.35,1853.77,318.24,1861.69,341.28C1869.62,364.31,1877.54,333.49,1885.47,303.50C1893.39,273.50,1901.32,244.33,1909.24,253.12C1917.17,261.92,1925.09,308.68,1933.02,328.68C1940.95,348.69,1948.87,341.94,1956.80,309.80C1964.72,277.65,1972.65,220.11,1980.57,227.94C1988.50,235.77,1996.42,308.98,2004.35,338.13C2012.27,367.28,2020.20,352.37,2028.12,334.98C2036.05,317.60,2043.97,297.74,2051.90,275.16C2059.82,252.59,2067.75,227.31,2075.67,240.53C2083.60,253.75,2091.52,305.48,2099.45,331.83C2107.37,358.18,2115.30,359.15,2123.22,344.43C2131.15,329.70,2139.07,299.28,2147.00,268.87" fill="none" stroke="#171717" stroke-width="1.8"/>
<path d="M7.20,277.68C15.13,288.99,23.05,300.30,30.98,307.59C38.90,314.88,46.83,318.16,54.75,304.44C62.68,290.72,70.60,260.01,78.53,236.75C86.45,213.50,94.38,197.71,102.30,186.07C110.23,174.42,118.15,166.92,126.08,192.99C134.00,219.06,141.93,278.70,149.85,261.00C157.78,243.29,165.70,148.25,173.63,165.29C181.55,182.32,189.48,311.44,197.40,341.59C205.33,371.74,213.25,302.93,221.18,252.81C229.11,202.69,237.03,171.28,244.96,181.66C252.88,192.04,260.81,244.20,268.73,236.75C276.66,229.30,284.58,162.24,292.51,167.49C300.43,172.74,308.36,250.32,316.28,282.40C324.21,314.49,332.13,301.09,340.06,303.50C347.98,305.91,355.91,324.12,363.83,291.53C371.76,258.95,379.68,175.56,387.61,141.04C395.53,106.52,403.46,120.87,411.38,151.12C419.31,181.37,427.23,227.53,435.16,261.63C443.09,295.73,451.01,317.77,458.94,319.55C466.86,321.34,474.79,302.87,482.71,288.70C490.64,274.53,498.56,264.65,506.49,270.76C514.41,276.86,522.34,298.94,530.26,278.94C538.19,258.94,546.11,196.87,554.04,181.66C561.96,166.45,569.89,198.10,577.81,248.40C585.74,298.70,593.66,367.65,601.59,330.26C609.51,292.87,617.44,149.15,625.36,141.99C633.29,134.82,641.21,264.21,649.14,299.72C657.07,335.23,664.99,276.87,672.92,220.07C680.84,163.27,688.77,108.04,696.69,132.23C704.62,156.42,712.54,260.02,720.47,273.59C728.39,287.16,736.32,210.68,744.24,204.96C752.17,199.23,760.09,264.25,768.02,257.22C775.94,250.18,783.87,171.09,791.79,141.36C799.72,111.63,807.64,131.27,815.57,120.58C823.49,109.89,831.42,68.86,839.34,74.30C847.27,79.74,855.19,131.65,863.12,178.19C871.05,224.74,878.97,265.93,886.90,281.77C894.82,297.62,902.75,288.13,910.67,266.66C918.60,245.19,926.52,211.74,934.45,198.66C942.37,185.58,950.30,192.87,958.22,204.33C966.15,215.78,974.07,231.39,982.00,257.22C989.92,283.04,997.85,319.08,1005.77,282.40C1013.70,245.73,1021.62,136.35,1029.55,99.49C1037.47,62.62,1045.40,98.28,1053.32,126.25C1061.25,154.21,1069.17,174.48,1077.10,162.45C1085.03,150.43,1092.95,106.11,1100.88,105.47C1108.80,104.82,1116.73,147.84,1124.65,185.44C1132.58,223.03,1140.50,255.19,1148.43,264.14C1156.35,273.10,1164.28,258.86,1172.20,266.66C1180.13,274.47,1188.05,304.33,1195.98,324.91C1203.90,345.48,1211.83,356.77,1219.75,331.52C1227.68,306.26,1235.60,244.46,1243.53,224.16C1251.45,203.86,1259.38,225.05,1267.30,232.98C1275.23,240.90,1283.15,235.57,1291.08,252.81C1299.01,270.05,1306.93,309.87,1314.86,274.22C1322.78,238.57,1330.71,127.46,1338.63,117.75C1346.56,108.03,1354.48,199.70,1362.41,261.63C1370.33,323.55,1378.26,355.73,1386.18,329.31C1394.11,302.90,1402.03,217.88,1409.96,199.60C1417.88,181.33,1425.81,229.80,1433.73,266.35C1441.66,302.90,1449.58,327.52,1457.51,275.79C1465.43,224.07,1473.36,95.99,1481.28,117.75C1489.21,139.50,1497.13,311.09,1505.06,312.00C1512.99,312.90,1520.91,143.13,1528.84,136.95C1536.76,130.78,1544.69,288.21,1552.61,323.02C1560.54,357.83,1568.46,270.02,1576.39,223.53C1584.31,177.04,1592.24,171.88,1600.16,176.62C1608.09,181.37,1616.01,196.02,1623.94,172.84C1631.86,149.66,1639.79,88.64,1647.71,105.78C1655.64,122.92,1663.56,218.21,1671.49,283.03C1679.41,347.85,1687.34,382.20,1695.26,318.61C1703.19,255.02,1711.11,93.50,1719.04,107.67C1726.97,121.85,1734.89,311.73,1742.82,328.37C1750.74,345.01,1758.67,188.43,1766.59,141.04C1774.52,93.66,1782.44,155.49,1790.37,187.95C1798.29,220.42,1806.22,223.54,1814.14,180.40C1822.07,137.26,1829.99,47.86,1837.92,81.54C1845.84,115.22,1853.77,271.97,1861.69,307.59C1869.62,343.21,1877.54,257.70,1885.47,196.14C1893.39,134.58,1901.32,96.98,1909.24,124.67C1917.17,152.36,1925.09,245.35,1933.02,275.48C1940.95,305.61,1948.87,272.88,1956.80,209.99C1964.72,147.11,1972.65,54.06,1980.57,76.82C1988.50,99.58,1996.42,238.15,2004.35,296.57C2012.27,354.99,2020.20,333.25,2028.12,290.59C2036.05,247.93,2043.97,184.35,2051.90,138.53C2059.82,92.70,2067.75,64.63,2075.67,99.49C2083.60,134.34,2091.52,232.12,2099.45,284.92C2107.37,337.73,2115.30,345.57,2123.22,312.00C2131.15,278.43,2139.07,203.44,2147.00,128.45L2147.00,268.87C2139.07,299.28,2131.15,329.70,2123.22,344.43C2115.30,359.15,2107.37,358.18,2099.45,331.83C2091.52,305.48,2083.60,253.75,2075.67,240.53C2067.75,227.31,2059.82,252.59,2051.90,275.16C2043.97,297.74,2036.05,317.60,2028.12,334.98C2020.20,352.37,2012.27,367.28,2004.35,338.13C1996.42,308.98,1988.50,235.77,1980.57,227.94C1972.65,220.11,1964.72,277.65,1956.80,309.80C1948.87,341.94,1940.95,348.69,1933.02,328.68C1925.09,308.68,1917.17,261.92,1909.24,253.12C1901.32,244.33,1893.39,273.50,1885.47,303.50C1877.54,333.49,1869.62,364.31,1861.69,341.28C1853.77,318.24,1845.84,241.35,1837.92,231.09C1829.99,220.82,1822.07,277.17,1814.14,297.20C1806.22,317.23,1798.29,300.93,1790.37,284.61C1782.44,268.28,1774.52,251.93,1766.59,275.16C1758.67,298.40,1750.74,361.22,1742.82,353.87C1734.89,346.53,1726.97,269.02,1719.04,262.57C1711.11,256.12,1703.19,320.73,1695.26,347.58C1687.34,374.42,1679.41,363.48,1671.49,331.83C1663.56,300.18,1655.64,247.81,1647.71,243.68C1639.79,239.55,1631.86,283.65,1623.94,294.05C1616.01,304.45,1608.09,281.15,1600.16,278.31C1592.24,275.47,1584.31,293.10,1576.39,316.09C1568.46,339.08,1560.54,367.43,1552.61,350.72C1544.69,334.02,1536.76,272.27,1528.84,275.16C1520.91,278.05,1512.99,345.58,1505.06,344.43C1497.13,343.27,1489.21,273.42,1481.28,265.72C1473.36,258.02,1465.43,312.46,1457.51,331.83C1449.58,351.21,1441.66,335.53,1433.73,322.39C1425.81,309.25,1417.88,298.66,1409.96,306.65C1402.03,314.63,1394.11,341.19,1386.18,353.87C1378.26,366.55,1370.33,365.34,1362.41,334.98C1354.48,304.62,1346.56,245.12,1338.63,249.98C1330.71,254.84,1322.78,324.06,1314.86,341.28C1306.93,358.49,1299.01,323.70,1291.08,316.09C1283.15,308.48,1275.23,328.06,1267.30,325.54C1259.38,323.02,1251.45,298.41,1243.53,303.50C1235.60,308.59,1227.68,343.39,1219.75,357.02C1211.83,370.65,1203.90,363.12,1195.98,350.72C1188.05,338.33,1180.13,321.07,1172.20,322.39C1164.28,323.71,1156.35,343.61,1148.43,338.13C1140.50,332.65,1132.58,301.80,1124.65,284.61C1116.73,267.41,1108.80,263.87,1100.88,262.57C1092.95,261.27,1085.03,262.22,1077.10,268.87C1069.17,275.51,1061.25,287.86,1053.32,275.16C1045.40,262.46,1037.47,224.72,1029.55,240.53C1021.62,256.35,1013.70,325.72,1005.77,344.43C997.85,363.13,989.92,331.17,982.00,319.24C974.07,307.31,966.15,315.43,958.22,309.80C950.30,304.16,942.37,284.79,934.45,290.90C926.52,297.02,918.60,328.64,910.67,338.13C902.75,347.62,894.82,334.98,886.90,328.68C878.97,322.39,871.05,322.45,863.12,300.35C855.19,278.25,847.27,233.99,839.34,231.09C831.42,228.18,823.49,266.63,815.57,272.01C807.64,277.40,799.72,249.73,791.79,262.57C783.87,275.41,775.94,328.75,768.02,334.98C760.09,341.22,752.17,300.34,744.24,297.20C736.32,294.06,728.39,328.65,720.47,325.54C712.54,322.43,704.62,281.62,696.69,275.16C688.77,268.71,680.84,296.61,672.92,319.24C664.99,341.87,657.07,359.22,649.14,338.13C641.21,317.04,633.29,257.50,625.36,262.57C617.44,267.64,609.51,337.33,601.59,353.87C593.66,370.41,585.74,333.79,577.81,316.09C569.89,298.39,561.96,299.60,554.04,303.50C546.11,307.40,538.19,313.99,530.26,322.39C522.34,330.79,514.41,341.01,506.49,341.28C498.56,341.55,490.64,331.88,482.71,331.83C474.79,331.79,466.86,341.37,458.94,347.58C451.01,353.78,443.09,356.62,435.16,338.13C427.23,319.64,419.31,279.81,411.38,265.72C403.46,251.62,395.53,263.26,387.61,281.46C379.68,299.66,371.76,324.42,363.83,334.98C355.91,345.54,347.98,341.90,340.06,341.28C332.13,340.65,324.21,343.04,316.28,325.54C308.36,308.03,300.43,270.62,292.51,275.16C284.58,279.70,276.66,326.19,268.73,328.68C260.81,331.18,252.88,289.68,244.96,284.61C237.03,279.53,229.11,310.88,221.18,334.98C213.25,359.08,205.33,375.94,197.40,360.17C189.48,344.40,181.55,296.01,173.63,294.05C165.70,292.09,157.78,336.56,149.85,338.13C141.93,339.70,134.00,298.39,126.08,287.76C118.15,277.13,110.23,297.18,102.30,303.50C94.38,309.82,86.45,302.40,78.53,312.94C70.60,323.49,62.68,351.99,54.75,357.02C46.83,362.05,38.90,343.62,30.98,338.13C23.05,332.64,15.13,340.11,7.20,347.58Z" fill="url(#fD)" fill-opacity="0.6" stroke="none"/>
<path d="M7.20,277.68C15.13,288.99,23.05,300.30,30.98,307.59C38.90,314.88,46.83,318.16,54.75,304.44C62.68,290.72,70.60,260.01,78.53,236.75C86.45,213.50,94.38,197.71,102.30,186.07C110.23,174.42,118.15,166.92,126.08,192.99C134.00,219.06,141.93,278.70,149.85,261.00C157.78,243.29,165.70,148.25,173.63,165.29C181.55,182.32,189.48,311.44,197.40,341.59C205.33,371.74,213.25,302.93,221.18,252.81C229.11,202.69,237.03,171.28,244.96,181.66C252.88,192.04,260.81,244.20,268.73,236.75C276.66,229.30,284.58,162.24,292.51,167.49C300.43,172.74,308.36,250.32,316.28,282.40C324.21,314.49,332.13,301.09,340.06,303.50C347.98,305.91,355.91,324.12,363.83,291.53C371.76,258.95,379.68,175.56,387.61,141.04C395.53,106.52,403.46,120.87,411.38,151.12C419.31,181.37,427.23,227.53,435.16,261.63C443.09,295.73,451.01,317.77,458.94,319.55C466.86,321.34,474.79,302.87,482.71,288.70C490.64,274.53,498.56,264.65,506.49,270.76C514.41,276.86,522.34,298.94,530.26,278.94C538.19,258.94,546.11,196.87,554.04,181.66C561.96,166.45,569.89,198.10,577.81,248.40C585.74,298.70,593.66,367.65,601.59,330.26C609.51,292.87,617.44,149.15,625.36,141.99C633.29,134.82,641.21,264.21,649.14,299.72C657.07,335.23,664.99,276.87,672.92,220.07C680.84,163.27,688.77,108.04,696.69,132.23C704.62,156.42,712.54,260.02,720.47,273.59C728.39,287.16,736.32,210.68,744.24,204.96C752.17,199.23,760.09,264.25,768.02,257.22C775.94,250.18,783.87,171.09,791.79,141.36C799.72,111.63,807.64,131.27,815.57,120.58C823.49,109.89,831.42,68.86,839.34,74.30C847.27,79.74,855.19,131.65,863.12,178.19C871.05,224.74,878.97,265.93,886.90,281.77C894.82,297.62,902.75,288.13,910.67,266.66C918.60,245.19,926.52,211.74,934.45,198.66C942.37,185.58,950.30,192.87,958.22,204.33C966.15,215.78,974.07,231.39,982.00,257.22C989.92,283.04,997.85,319.08,1005.77,282.40C1013.70,245.73,1021.62,136.35,1029.55,99.49C1037.47,62.62,1045.40,98.28,1053.32,126.25C1061.25,154.21,1069.17,174.48,1077.10,162.45C1085.03,150.43,1092.95,106.11,1100.88,105.47C1108.80,104.82,1116.73,147.84,1124.65,185.44C1132.58,223.03,1140.50,255.19,1148.43,264.14C1156.35,273.10,1164.28,258.86,1172.20,266.66C1180.13,274.47,1188.05,304.33,1195.98,324.91C1203.90,345.48,1211.83,356.77,1219.75,331.52C1227.68,306.26,1235.60,244.46,1243.53,224.16C1251.45,203.86,1259.38,225.05,1267.30,232.98C1275.23,240.90,1283.15,235.57,1291.08,252.81C1299.01,270.05,1306.93,309.87,1314.86,274.22C1322.78,238.57,1330.71,127.46,1338.63,117.75C1346.56,108.03,1354.48,199.70,1362.41,261.63C1370.33,323.55,1378.26,355.73,1386.18,329.31C1394.11,302.90,1402.03,217.88,1409.96,199.60C1417.88,181.33,1425.81,229.80,1433.73,266.35C1441.66,302.90,1449.58,327.52,1457.51,275.79C1465.43,224.07,1473.36,95.99,1481.28,117.75C1489.21,139.50,1497.13,311.09,1505.06,312.00C1512.99,312.90,1520.91,143.13,1528.84,136.95C1536.76,130.78,1544.69,288.21,1552.61,323.02C1560.54,357.83,1568.46,270.02,1576.39,223.53C1584.31,177.04,1592.24,171.88,1600.16,176.62C1608.09,181.37,1616.01,196.02,1623.94,172.84C1631.86,149.66,1639.79,88.64,1647.71,105.78C1655.64,122.92,1663.56,218.21,1671.49,283.03C1679.41,347.85,1687.34,382.20,1695.26,318.61C1703.19,255.02,1711.11,93.50,1719.04,107.67C1726.97,121.85,1734.89,311.73,1742.82,328.37C1750.74,345.01,1758.67,188.43,1766.59,141.04C1774.52,93.66,1782.44,155.49,1790.37,187.95C1798.29,220.42,1806.22,223.54,1814.14,180.40C1822.07,137.26,1829.99,47.86,1837.92,81.54C1845.84,115.22,1853.77,271.97,1861.69,307.59C1869.62,343.21,1877.54,257.70,1885.47,196.14C1893.39,134.58,1901.32,96.98,1909.24,124.67C1917.17,152.36,1925.09,245.35,1933.02,275.48C1940.95,305.61,1948.87,272.88,1956.80,209.99C1964.72,147.11,1972.65,54.06,1980.57,76.82C1988.50,99.58,1996.42,238.15,2004.35,296.57C2012.27,354.99,2020.20,333.25,2028.12,290.59C2036.05,247.93,2043.97,184.35,2051.90,138.53C2059.82,92.70,2067.75,64.63,2075.67,99.49C2083.60,134.34,2091.52,232.12,2099.45,284.92C2107.37,337.73,2115.30,345.57,2123.22,312.00C2131.15,278.43,2139.07,203.44,2147.00,128.45" fill="none" stroke="#171717" stroke-width="1.8"/>
</svg>
<div id="t51" class="t" style="left:628.5px;top:1298.3px;font-size:22.032000000000004px;font-weight:400;color:#6b6b6b;-webkit-text-stroke:0.35px #6b6b6b;transform:translateX(-50%);">Apr 4</div>
<div id="t52" class="t" style="left:747.4px;top:1298.3px;font-size:22.032000000000004px;font-weight:400;color:#6b6b6b;-webkit-text-stroke:0.35px #6b6b6b;transform:translateX(-50%);">Apr 9</div>
<div id="t53" class="t" style="left:866.3px;top:1298.3px;font-size:22.032000000000004px;font-weight:400;color:#6b6b6b;-webkit-text-stroke:0.35px #6b6b6b;transform:translateX(-50%);">Apr 14</div>
<div id="t54" class="t" style="left:1008.9px;top:1298.3px;font-size:22.032000000000004px;font-weight:400;color:#6b6b6b;-webkit-text-stroke:0.35px #6b6b6b;transform:translateX(-50%);">Apr 20</div>
<div id="t55" class="t" style="left:1151.6px;top:1298.3px;font-size:22.032000000000004px;font-weight:400;color:#6b6b6b;-webkit-text-stroke:0.35px #6b6b6b;transform:translateX(-50%);">Apr 26</div>
<div id="t56" class="t" style="left:1294.2px;top:1298.3px;font-size:22.032000000000004px;font-weight:400;color:#6b6b6b;-webkit-text-stroke:0.35px #6b6b6b;transform:translateX(-50%);">May 2</div>
<div id="t57" class="t" style="left:1436.9px;top:1298.3px;font-size:22.032000000000004px;font-weight:400;color:#6b6b6b;-webkit-text-stroke:0.35px #6b6b6b;transform:translateX(-50%);">May 8</div>
<div id="t58" class="t" style="left:1579.5px;top:1298.3px;font-size:22.032000000000004px;font-weight:400;color:#6b6b6b;-webkit-text-stroke:0.35px #6b6b6b;transform:translateX(-50%);">May 14</div>
<div id="t59" class="t" style="left:1722.2px;top:1298.3px;font-size:22.032000000000004px;font-weight:400;color:#6b6b6b;-webkit-text-stroke:0.35px #6b6b6b;transform:translateX(-50%);">May 20</div>
<div id="t60" class="t" style="left:1864.9px;top:1298.3px;font-size:22.032000000000004px;font-weight:400;color:#6b6b6b;-webkit-text-stroke:0.35px #6b6b6b;transform:translateX(-50%);">May 26</div>
<div id="t61" class="t" style="left:2007.5px;top:1298.3px;font-size:22.032000000000004px;font-weight:400;color:#6b6b6b;-webkit-text-stroke:0.35px #6b6b6b;transform:translateX(-50%);">Jun 1</div>
<div id="t62" class="t" style="left:2126.4px;top:1298.3px;font-size:22.032000000000004px;font-weight:400;color:#6b6b6b;-webkit-text-stroke:0.35px #6b6b6b;transform:translateX(-50%);">Jun 6</div>
<div id="t63" class="t" style="left:2245.3px;top:1298.3px;font-size:22.032000000000004px;font-weight:400;color:#6b6b6b;-webkit-text-stroke:0.35px #6b6b6b;transform:translateX(-50%);">Jun 11</div>
<div id="t64" class="t" style="left:2387.9px;top:1298.3px;font-size:22.032000000000004px;font-weight:400;color:#6b6b6b;-webkit-text-stroke:0.35px #6b6b6b;transform:translateX(-50%);">Jun 17</div>
<div id="t65" class="t" style="left:2530.6px;top:1298.3px;font-size:22.032000000000004px;font-weight:400;color:#6b6b6b;-webkit-text-stroke:0.35px #6b6b6b;transform:translateX(-50%);">Jun 23</div>
<div id="t66" class="t" style="right:103.0px;top:1298.3px;font-size:22.032000000000004px;font-weight:400;color:#6b6b6b;-webkit-text-stroke:0.35px #6b6b6b;">Jun 30</div>
<div style="position:absolute;left:504.5px;top:1424.8px;width:906.2px;height:65.0px;background:#f4f4f4;border-radius:14px;"></div>
<div style="position:absolute;left:509.4px;top:1431.9px;width:115.1px;height:52.1px;background:#fff;border-radius:11px;box-shadow:0 1px 3px rgba(0,0,0,0.1),0 1px 2px -1px rgba(0,0,0,0.1);"></div>
<div id="t67" class="t" style="left:524.2px;top:1446.6px;font-size:25.704px;font-weight:400;color:#0a0a0a;letter-spacing:0.868px;-webkit-text-stroke:0.7px #0a0a0a;">Outline</div>
<div id="t68" class="t" style="left:640.9px;top:1446.6px;font-size:25.704px;font-weight:400;color:#0a0a0a;letter-spacing:0.420px;-webkit-text-stroke:0.7px #0a0a0a;">Past Performance</div>
<div style="position:absolute;left:864.5px;top:1440.0px;width:35.1px;height:35.7px;background:#d4d4d4;border-radius:50%;"></div>
<div id="t69" class="t" style="left:882.0px;top:1447.8px;font-size:22.032000000000004px;font-weight:400;color:#0a0a0a;-webkit-text-stroke:0.7px #0a0a0a;transform:translateX(-50%);">3</div>
<div id="t70" class="t" style="left:929.7px;top:1446.6px;font-size:25.704px;font-weight:400;color:#0a0a0a;letter-spacing:0.193px;-webkit-text-stroke:0.7px #0a0a0a;">Key Personnel</div>
<div style="position:absolute;left:1109.9px;top:1440.0px;width:36.0px;height:35.7px;background:#d4d4d4;border-radius:50%;"></div>
<div id="t71" class="t" style="left:1127.9px;top:1447.8px;font-size:22.032000000000004px;font-weight:400;color:#0a0a0a;-webkit-text-stroke:0.7px #0a0a0a;transform:translateX(-50%);">2</div>
<div id="t72" class="t" style="left:1175.9px;top:1446.6px;font-size:25.704px;font-weight:400;color:#0a0a0a;letter-spacing:0.563px;-webkit-text-stroke:0.7px #0a0a0a;">Focus Documents</div>
<div style="position:absolute;left:2160.5px;top:1429.0px;width:353.0px;height:58.0px;border:1px solid #e5e5e5;box-sizing:border-box;border-radius:14px;background:#fff;box-shadow:0 1px 2px rgba(0,0,0,0.05);"></div>
<svg style="position:absolute;left:2178.8px;top:1443.1px;" width="28.8" height="28.8" viewBox="0 0 24 24" fill="none" stroke="#0a0a0a" stroke-width="2" stroke-linecap="round" stroke-linejoin="round"><rect width="18" height="18" x="3" y="3" rx="2"/><path d="M12 3v18"/></svg>
<div id="t73" class="t" style="left:2218.7px;top:1446.4px;font-size:25.704px;font-weight:400;color:#0a0a0a;letter-spacing:0.453px;-webkit-text-stroke:0.7px #0a0a0a;">Customize Columns</div>
<svg style="position:absolute;left:2467.1px;top:1443.1px;" width="28.8" height="28.8" viewBox="0 0 24 24" fill="none" stroke="#0a0a0a" stroke-width="2" stroke-linecap="round" stroke-linejoin="round"><path d="m6 9 6 6 6-6"/></svg>
<div style="position:absolute;left:2530.0px;top:1429.0px;width:220.0px;height:58.0px;border:1px solid #e5e5e5;box-sizing:border-box;border-radius:14px;background:#fff;box-shadow:0 1px 2px rgba(0,0,0,0.05);"></div>
<svg style="position:absolute;left:2548.3px;top:1443.1px;" width="28.8" height="28.8" viewBox="0 0 24 24" fill="none" stroke="#0a0a0a" stroke-width="2" stroke-linecap="round" stroke-linejoin="round"><path d="M5 12h14"/><path d="M12 5v14"/></svg>
<div id="t74" class="t" style="left:2587.4px;top:1446.4px;font-size:25.704px;font-weight:400;color:#0a0a0a;letter-spacing:0.577px;-webkit-text-stroke:0.7px #0a0a0a;">Add Section</div>
<div style="position:absolute;left:504.0px;top:1533.0px;width:2246.0px;height:567.0px;border:1px solid #e5e5e5;box-sizing:border-box;border-radius:14px;overflow:hidden;background:#fff;"></div>
<div style="position:absolute;left:505.0px;top:1534.0px;width:2244.0px;height:72.0px;background:#f4f4f4;border-radius:13px 13px 0 0;"></div>
<div style="position:absolute;left:505.0px;top:1606.0px;width:2244.0px;height:1.0px;background:#e5e5e5;"></div>
<div style="position:absolute;left:505.0px;top:1700.0px;width:2244.0px;height:1.0px;background:#e5e5e5;"></div>
<div style="position:absolute;left:505.0px;top:1795.0px;width:2244.0px;height:1.0px;background:#e5e5e5;"></div>
<div style="position:absolute;left:505.0px;top:1890.0px;width:2244.0px;height:1.0px;background:#e5e5e5;"></div>
<div style="position:absolute;left:604.2px;top:1556.0px;width:28.8px;height:28.8px;border:1px solid #e5e5e5;box-sizing:border-box;border-radius:6px;background:#fff;box-shadow:0 1px 2px rgba(0,0,0,0.05);"></div>
<div id="t75" class="t" style="left:653.3px;top:1559.2px;font-size:25.704px;font-weight:400;color:#0a0a0a;letter-spacing:0.470px;-webkit-text-stroke:0.7px #0a0a0a;">Header</div>
<div id="t76" class="t" style="left:1346.4px;top:1559.2px;font-size:25.704px;font-weight:400;color:#0a0a0a;letter-spacing:0.659px;-webkit-text-stroke:0.7px #0a0a0a;">Section Type</div>
<div id="t77" class="t" style="left:1672.4px;top:1559.2px;font-size:25.704px;font-weight:400;color:#0a0a0a;letter-spacing:0.954px;-webkit-text-stroke:0.7px #0a0a0a;">Status</div>
<div id="t78" class="t" style="left:1911.2px;top:1559.2px;font-size:25.704px;font-weight:400;color:#0a0a0a;letter-spacing:0.979px;-webkit-text-stroke:0.7px #0a0a0a;">Target</div>
<div id="t79" class="t" style="left:2092.4px;top:1559.2px;font-size:25.704px;font-weight:400;color:#0a0a0a;letter-spacing:1.162px;-webkit-text-stroke:0.7px #0a0a0a;">Limit</div>
<div id="t80" class="t" style="left:2274.3px;top:1559.2px;font-size:25.704px;font-weight:400;color:#0a0a0a;letter-spacing:0.203px;-webkit-text-stroke:0.7px #0a0a0a;">Reviewer</div>
<svg style="position:absolute;left:533.9px;top:1642.9px;" width="21.6" height="21.6" viewBox="0 0 24 24" fill="none" stroke="#6b6b6b" stroke-width="2" stroke-linecap="round" stroke-linejoin="round"><circle cx="9" cy="12" r="1"/><circle cx="9" cy="5" r="1"/><circle cx="9" cy="19" r="1"/><circle cx="15" cy="12" r="1"/><circle cx="15" cy="5" r="1"/><circle cx="15" cy="19" r="1"/></svg>
<div style="position:absolute;left:604.2px;top:1639.2px;width:28.8px;height:28.8px;border:1px solid #e5e5e5;box-sizing:border-box;border-radius:6px;background:#fff;box-shadow:0 1px 2px rgba(0,0,0,0.05);"></div>
<div id="t81" class="t" style="left:653.3px;top:1641.8px;font-size:25.704px;font-weight:400;color:#0a0a0a;letter-spacing:0.199px;-webkit-text-stroke:0.7px #0a0a0a;">Cover page</div>
<div style="position:absolute;left:1347.4px;top:1634.2px;width:141.1px;height:37.8px;border:1px solid #e5e5e5;box-sizing:border-box;border-radius:12px;"></div>
<div id="t82" class="t" style="left:1358.2px;top:1642.6px;font-size:22.032000000000004px;font-weight:400;color:#6b6b6b;letter-spacing:0.524px;-webkit-text-stroke:0.7px #6b6b6b;">Cover page</div>
<div style="position:absolute;left:1673.4px;top:1634.2px;width:160.2px;height:37.8px;border:1px solid #e5e5e5;box-sizing:border-box;border-radius:12px;"></div>
<svg style="position:absolute;left:1685.2px;top:1642.0px;" width="21.6" height="21.6" viewBox="0 0 24 24" fill="none" stroke="#6b6b6b" stroke-width="2" stroke-linecap="round" stroke-linejoin="round"><path d="M12 2v4"/><path d="m16.2 7.8 2.9-2.9"/><path d="M18 12h4"/><path d="m16.2 16.2 2.9 2.9"/><path d="M12 18v4"/><path d="m4.9 19.1 2.9-2.9"/><path d="M2 12h4"/><path d="m4.9 4.9 2.9 2.9"/></svg>
<div id="t83" class="t" style="left:1713.0px;top:1642.6px;font-size:22.032000000000004px;font-weight:400;color:#6b6b6b;letter-spacing:0.525px;-webkit-text-stroke:0.7px #6b6b6b;">In Process</div>
<div id="t84" class="t" style="left:1934.0px;top:1641.8px;font-size:25.704px;font-weight:400;color:#0a0a0a;-webkit-text-stroke:0.35px #0a0a0a;">18</div>
<div id="t85" class="t" style="left:2115.0px;top:1641.8px;font-size:25.704px;font-weight:400;color:#0a0a0a;-webkit-text-stroke:0.35px #0a0a0a;">5</div>
<div id="t86" class="t" style="left:2274.3px;top:1641.8px;font-size:25.704px;font-weight:400;color:#0a0a0a;letter-spacing:-0.172px;-webkit-text-stroke:0.35px #0a0a0a;">Eddie Lake</div>
<svg style="position:absolute;left:2669.1px;top:1639.0px;" width="28.8" height="28.8" viewBox="0 0 24 24" fill="none" stroke="#6b6b6b" stroke-width="2" stroke-linecap="round" stroke-linejoin="round"><circle cx="12" cy="12" r="1"/><circle cx="12" cy="5" r="1"/><circle cx="12" cy="19" r="1"/></svg>
<svg style="position:absolute;left:533.9px;top:1737.2px;" width="21.6" height="21.6" viewBox="0 0 24 24" fill="none" stroke="#6b6b6b" stroke-width="2" stroke-linecap="round" stroke-linejoin="round"><circle cx="9" cy="12" r="1"/><circle cx="9" cy="5" r="1"/><circle cx="9" cy="19" r="1"/><circle cx="15" cy="12" r="1"/><circle cx="15" cy="5" r="1"/><circle cx="15" cy="19" r="1"/></svg>
<div style="position:absolute;left:604.2px;top:1733.5px;width:28.8px;height:28.8px;border:1px solid #e5e5e5;box-sizing:border-box;border-radius:6px;background:#fff;box-shadow:0 1px 2px rgba(0,0,0,0.05);"></div>
<div id="t87" class="t" style="left:653.3px;top:1736.1px;font-size:25.704px;font-weight:400;color:#0a0a0a;letter-spacing:0.661px;-webkit-text-stroke:0.7px #0a0a0a;">Table of contents</div>
<div style="position:absolute;left:1347.4px;top:1728.5px;width:201.9px;height:37.8px;border:1px solid #e5e5e5;box-sizing:border-box;border-radius:12px;"></div>
<div id="t88" class="t" style="left:1358.2px;top:1736.9px;font-size:22.032000000000004px;font-weight:400;color:#6b6b6b;letter-spacing:0.862px;-webkit-text-stroke:0.7px #6b6b6b;">Table of contents</div>
<div style="position:absolute;left:1673.4px;top:1728.5px;width:106.4px;height:37.8px;border:1px solid #e5e5e5;box-sizing:border-box;border-radius:12px;"></div>
<svg style="position:absolute;left:1685.2px;top:1736.3px;" width="21.6" height="21.6" viewBox="0 0 24 24" fill="none" stroke="#22c55e" stroke-width="2" stroke-linecap="round" stroke-linejoin="round"><path d="M21.801 10A10 10 0 1 1 17 3.335"/><path d="m9 11 3 3L22 4"/></svg>
<div id="t89" class="t" style="left:1713.0px;top:1736.9px;font-size:22.032000000000004px;font-weight:400;color:#6b6b6b;letter-spacing:0.767px;-webkit-text-stroke:0.7px #6b6b6b;">Done</div>
<div id="t90" class="t" style="left:1934.0px;top:1736.1px;font-size:25.704px;font-weight:400;color:#0a0a0a;-webkit-text-stroke:0.35px #0a0a0a;">29</div>
<div id="t91" class="t" style="left:2115.0px;top:1736.1px;font-size:25.704px;font-weight:400;color:#0a0a0a;-webkit-text-stroke:0.35px #0a0a0a;">24</div>
<div id="t92" class="t" style="left:2274.3px;top:1736.1px;font-size:25.704px;font-weight:400;color:#0a0a0a;letter-spacing:-0.172px;-webkit-text-stroke:0.35px #0a0a0a;">Eddie Lake</div>
<svg style="position:absolute;left:2669.1px;top:1733.3px;" width="28.8" height="28.8" viewBox="0 0 24 24" fill="none" stroke="#6b6b6b" stroke-width="2" stroke-linecap="round" stroke-linejoin="round"><circle cx="12" cy="12" r="1"/><circle cx="12" cy="5" r="1"/><circle cx="12" cy="19" r="1"/></svg>
<svg style="position:absolute;left:533.9px;top:1832.4px;" width="21.6" height="21.6" viewBox="0 0 24 24" fill="none" stroke="#6b6b6b" stroke-width="2" stroke-linecap="round" stroke-linejoin="round"><circle cx="9" cy="12" r="1"/><circle cx="9" cy="5" r="1"/><circle cx="9" cy="19" r="1"/><circle cx="15" cy="12" r="1"/><circle cx="15" cy="5" r="1"/><circle cx="15" cy="19" r="1"/></svg>
<div style="position:absolute;left:604.2px;top:1828.7px;width:28.8px;height:28.8px;border:1px solid #e5e5e5;box-sizing:border-box;border-radius:6px;background:#fff;box-shadow:0 1px 2px rgba(0,0,0,0.05);"></div>
<div id="t93" class="t" style="left:653.3px;top:1831.3px;font-size:25.704px;font-weight:400;color:#0a0a0a;letter-spacing:0.405px;-webkit-text-stroke:0.7px #0a0a0a;">Executive summary</div>
<div style="position:absolute;left:1347.4px;top:1823.7px;width:118.3px;height:37.8px;border:1px solid #e5e5e5;box-sizing:border-box;border-radius:12px;"></div>
<div id="t94" class="t" style="left:1358.2px;top:1832.1px;font-size:22.032000000000004px;font-weight:400;color:#6b6b6b;letter-spacing:0.816px;-webkit-text-stroke:0.7px #6b6b6b;">Narrative</div>
<div style="position:absolute;left:1673.4px;top:1823.7px;width:106.4px;height:37.8px;border:1px solid #e5e5e5;box-sizing:border-box;border-radius:12px;"></div>
<svg style="position:absolute;left:1685.2px;top:1831.5px;" width="21.6" height="21.6" viewBox="0 0 24 24" fill="none" stroke="#22c55e" stroke-width="2" stroke-linecap="round" stroke-linejoin="round"><path d="M21.801 10A10 10 0 1 1 17 3.335"/><path d="m9 11 3 3L22 4"/></svg>
<div id="t95" class="t" style="left:1713.0px;top:1832.1px;font-size:22.032000000000004px;font-weight:400;color:#6b6b6b;letter-spacing:0.767px;-webkit-text-stroke:0.7px #6b6b6b;">Done</div>
<div id="t96" class="t" style="left:1934.0px;top:1831.3px;font-size:25.704px;font-weight:400;color:#0a0a0a;-webkit-text-stroke:0.35px #0a0a0a;">10</div>
<div id="t97" class="t" style="left:2115.0px;top:1831.3px;font-size:25.704px;font-weight:400;color:#0a0a0a;-webkit-text-stroke:0.35px #0a0a0a;">13</div>
<div id="t98" class="t" style="left:2274.3px;top:1831.3px;font-size:25.704px;font-weight:400;color:#0a0a0a;letter-spacing:-0.172px;-webkit-text-stroke:0.35px #0a0a0a;">Eddie Lake</div>
<svg style="position:absolute;left:2669.1px;top:1828.5px;" width="28.8" height="28.8" viewBox="0 0 24 24" fill="none" stroke="#6b6b6b" stroke-width="2" stroke-linecap="round" stroke-linejoin="round"><circle cx="12" cy="12" r="1"/><circle cx="12" cy="5" r="1"/><circle cx="12" cy="19" r="1"/></svg>
<svg style="position:absolute;left:533.9px;top:1927.6px;" width="21.6" height="21.6" viewBox="0 0 24 24" fill="none" stroke="#6b6b6b" stroke-width="2" stroke-linecap="round" stroke-linejoin="round"><circle cx="9" cy="12" r="1"/><circle cx="9" cy="5" r="1"/><circle cx="9" cy="19" r="1"/><circle cx="15" cy="12" r="1"/><circle cx="15" cy="5" r="1"/><circle cx="15" cy="19" r="1"/></svg>
<div style="position:absolute;left:604.2px;top:1923.9px;width:28.8px;height:28.8px;border:1px solid #e5e5e5;box-sizing:border-box;border-radius:6px;background:#fff;box-shadow:0 1px 2px rgba(0,0,0,0.05);"></div>
<div id="t99" class="t" style="left:653.3px;top:1926.5px;font-size:25.704px;font-weight:400;color:#0a0a0a;-webkit-text-stroke:0.7px #0a0a0a;">Technical approach</div>
<div style="position:absolute;left:1347.4px;top:1918.9px;width:118.3px;height:37.8px;border:1px solid #e5e5e5;box-sizing:border-box;border-radius:12px;"></div>
<div id="t100" class="t" style="left:1358.2px;top:1927.3px;font-size:22.032000000000004px;font-weight:400;color:#6b6b6b;letter-spacing:0.816px;-webkit-text-stroke:0.7px #6b6b6b;">Narrative</div>
<div style="position:absolute;left:1673.4px;top:1918.9px;width:106.4px;height:37.8px;border:1px solid #e5e5e5;box-sizing:border-box;border-radius:12px;"></div>
<svg style="position:absolute;left:1685.2px;top:1926.7px;" width="21.6" height="21.6" viewBox="0 0 24 24" fill="none" stroke="#22c55e" stroke-width="2" stroke-linecap="round" stroke-linejoin="round"><path d="M21.801 10A10 10 0 1 1 17 3.335"/><path d="m9 11 3 3L22 4"/></svg>
<div id="t101" class="t" style="left:1713.0px;top:1927.3px;font-size:22.032000000000004px;font-weight:400;color:#6b6b6b;letter-spacing:0.767px;-webkit-text-stroke:0.7px #6b6b6b;">Done</div>
<div id="t102" class="t" style="left:1934.0px;top:1926.5px;font-size:25.704px;font-weight:400;color:#0a0a0a;-webkit-text-stroke:0.35px #0a0a0a;">27</div>
<div id="t103" class="t" style="left:2115.0px;top:1926.5px;font-size:25.704px;font-weight:400;color:#0a0a0a;-webkit-text-stroke:0.35px #0a0a0a;">23</div>
<div id="t104" class="t" style="left:2274.3px;top:1926.5px;font-size:25.704px;font-weight:400;color:#0a0a0a;-webkit-text-stroke:0.35px #0a0a0a;">Jamik Tashpulatov</div>
<svg style="position:absolute;left:2669.1px;top:1923.7px;" width="28.8" height="28.8" viewBox="0 0 24 24" fill="none" stroke="#6b6b6b" stroke-width="2" stroke-linecap="round" stroke-linejoin="round"><circle cx="12" cy="12" r="1"/><circle cx="12" cy="5" r="1"/><circle cx="12" cy="19" r="1"/></svg>
</body></html>
